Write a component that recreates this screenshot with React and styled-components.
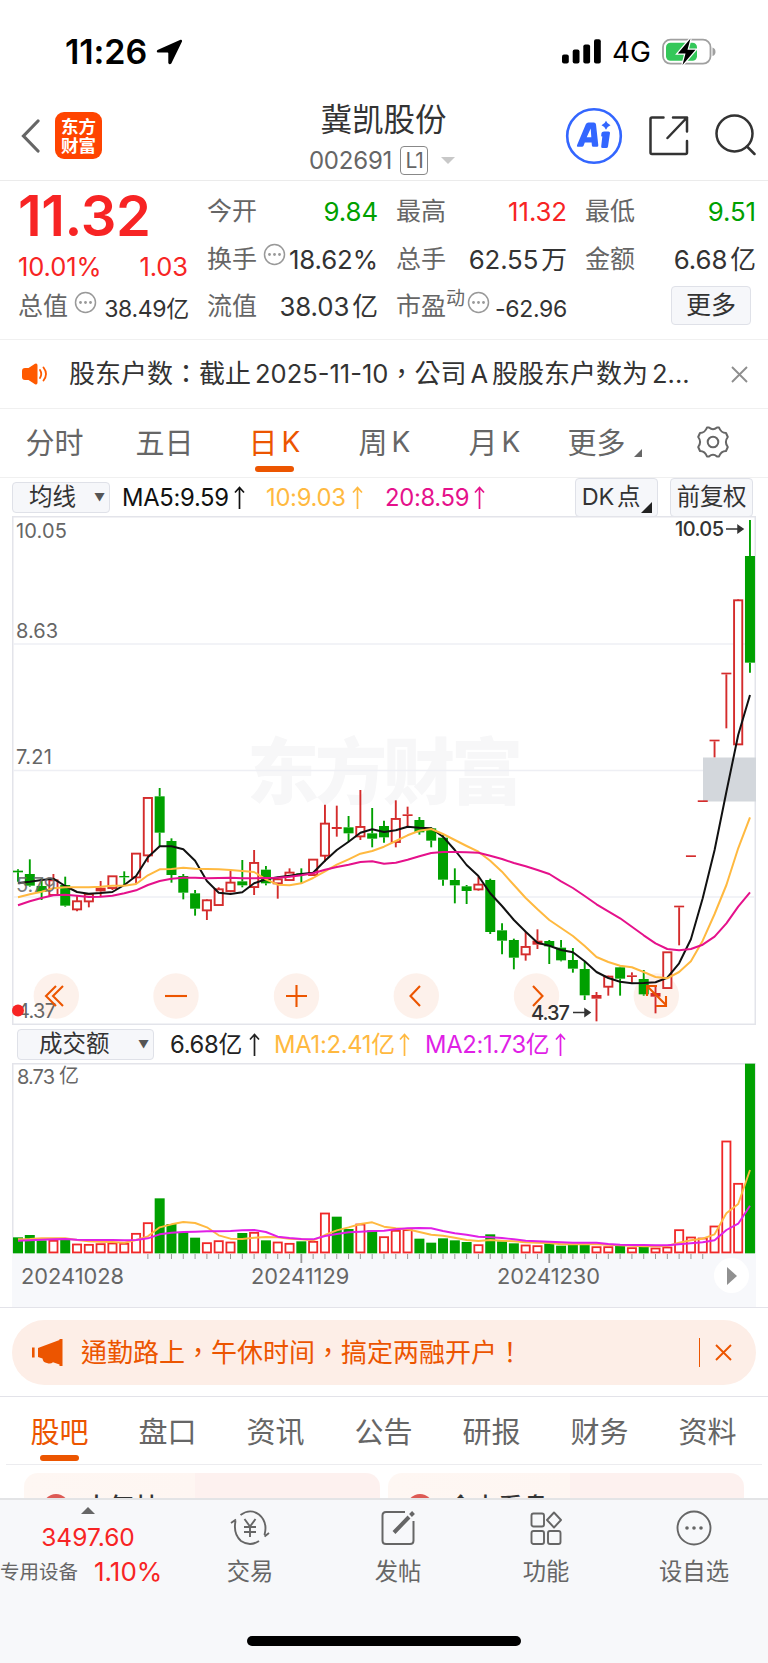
import { useState } from 'react'
import styled, { createGlobalStyle, css } from 'styled-components'

const RED = '#f72424'
const GREEN = '#00a000'
const ORANGE = '#ec5500'
const YELLOW = '#ffb940'
const PINK = '#e5118b'
const PURPLE = '#e01fe6'

// [color, high, body top, body bottom, low] in thirds of a px
const candles = [
  ['g', 298, 302, 307, 335], ['g', 268, 312, 347, 350], ['g', 325, 348, 366, 390], ['r', 312, 330, 376, 376],
  ['g', 320, 345, 407, 410], ['r', 375, 393, 419, 424], ['r', 370, 372, 395, 412], ['r', 333, 353, 364, 380],
  ['r', 318, 318, 355, 360], ['g', 304, 318, 322, 345], ['r', 249, 250, 323, 340], ['r', 82, 83, 257, 277],
  ['g', 54, 79, 188, 230], ['g', 205, 213, 315, 338], ['g', 312, 318, 368, 388], ['g', 360, 370, 416, 437],
  ['r', 388, 390, 422, 450], ['r', 352, 357, 406, 406], ['r', 303, 337, 364, 367], ['g', 270, 334, 346, 352],
  ['r', 240, 278, 352, 375], ['g', 288, 299, 340, 346], ['r', 325, 327, 341, 386], ['r', 295, 307, 331, 333],
  ['g', 295, 310, 314, 340], ['r', 268, 268, 316, 318], ['r', 104, 160, 258, 275], ['r', 107, 171, 177, 200],
  ['g', 138, 172, 190, 216], ['r', 60, 170, 200, 210], ['g', 114, 190, 206, 232], ['g', 152, 168, 202, 218],
  ['r', 91, 146, 217, 232], ['r', 110, 133, 138, 172], ['g', 141, 150, 187, 194], ['g', 172, 175, 212, 232],
  ['g', 195, 203, 329, 347], ['g', 295, 330, 346, 400], ['g', 345, 349, 363, 402], ['r', 320, 343, 359, 362],
  ['g', 326, 330, 486, 492], ['g', 460, 481, 512, 553], ['g', 506, 510, 563, 598], ['r', 485, 530, 554, 572],
  ['r', 478, 512, 524, 537], ['g', 510, 513, 529, 582], ['g', 510, 533, 571, 574], ['g', 534, 570, 596, 608],
  ['g', 575, 597, 676, 690], ['r', 666, 675, 686, 754], ['r', 617, 619, 651, 677], ['g', 590, 592, 626, 677],
  ['r', 607, 616, 621, 638], ['g', 600, 627, 673, 677], ['r', 645, 669, 680, 730], ['r', 546, 546, 655, 657],
  ['r', 407, 407, 412, 526], ['r', 256, 256, 261, 261], ['r', 91, 91, 96, 96], ['r', -91, -91, -86, -38],
  ['r', -292, -292, -287, -125], ['r', -512, -510, -76, -76], ['g', -750, -642, -322, -292],
]

const ma5 = [339, 335, 330, 326, 348, 366, 371, 369, 366, 345, 318, 262, 229, 229, 238, 272, 333, 368, 372, 367, 340, 328, 322, 317, 312, 308, 272, 240, 215, 188, 178, 186, 181, 170, 173, 175, 200, 240, 285, 318, 370, 408, 450, 485, 518, 527, 540, 547, 574, 606, 624, 635, 640, 639, 637, 623, 580, 508, 385, 240, 65, -105, -225]
const ma10 = [382, 373, 365, 355, 352, 352, 352, 350, 347, 347, 342, 316, 298, 297, 293, 296, 297, 298, 300, 303, 306, 328, 344, 346, 340, 324, 304, 284, 268, 251, 243, 230, 213, 196, 182, 177, 192, 210, 228, 245, 272, 305, 345, 384, 418, 450, 474, 498, 528, 561, 576, 587, 592, 606, 621, 625, 606, 574, 512, 432, 345, 235, 142]
const ma20 = [406, 394, 384, 376, 374, 377, 381, 380, 377, 370, 361, 345, 333, 326, 323, 323, 325, 324, 323, 325, 325, 324, 323, 320, 316, 310, 299, 291, 284, 276, 274, 281, 278, 269, 259, 249, 246, 246, 247, 248, 257, 267, 279, 289, 300, 312, 334, 354, 378, 403, 424, 445, 470, 496, 520, 537, 541, 537, 524, 500, 460, 410, 367]

const volumes = [652, 645, 661, 661, 659, 672, 673, 671, 669, 670, 640, 608, 535, 612, 636, 653, 668, 662, 666, 639, 637, 661, 666, 670, 664, 664, 579, 590, 627, 612, 631, 650, 631, 629, 656, 668, 655, 661, 666, 674, 643, 664, 670, 675, 677, 670, 677, 674, 674, 680, 680, 678, 683, 681, 684, 681, 629, 651, 654, 618, 363, 490, 131]
const volumeColors = 'gggrgrrrrrrrgggg' + 'rrrgrgrrgrrggrgr' + 'rrgggggrgggrrggg' + 'grrgrgrrrrrrrrg'
const volMa1 = [658, 657, 655, 655, 655, 660, 664, 665, 666, 668, 660, 649, 622, 613, 606, 609, 622, 646, 656, 657, 653, 651, 652, 656, 658, 661, 645, 631, 622, 612, 607, 620, 625, 628, 636, 644, 647, 653, 660, 663, 660, 662, 664, 667, 668, 669, 673, 673, 673, 673, 674, 676, 677, 679, 679, 678, 668, 661, 656, 643, 580, 552, 450]
const volMa2 = [662, 661, 659, 658, 657, 659, 660, 660, 660, 661, 660, 655, 643, 638, 636, 635, 634, 634, 633, 631, 630, 636, 650, 654, 657, 658, 648, 642, 637, 635, 633, 632, 628, 625, 624, 625, 633, 640, 644, 650, 652, 654, 658, 662, 664, 665, 667, 668, 668, 668, 672, 674, 675, 675, 676, 676, 673, 670, 667, 661, 630, 611, 557]

const candleX = i => 6 + i * 11.806
const priceY = v => 254 + v / 3
const volY = v => (v - 129) / 3
const toPoints = (list, y) => list.map((v, i) => `${candleX(i).toFixed(1)},${y(v).toFixed(1)}`).join(' ')

const periods = ['分时', '五日', '日K', '周K', '月K', '更多']
const sections = ['股吧', '盘口', '资讯', '公告', '研报', '财务', '资料']

export default function App() {
  const [period, setPeriod] = useState('日K')
  const [section, setSection] = useState('股吧')

  return (
    <Screen>
      <GlobalStyle />
      <StatusBar>
        <Clock>11:26</Clock>
        <LocationIcon />
        <Network>
          <SignalIcon />
          <span>4G</span>
          <BatteryIcon />
        </Network>
      </StatusBar>

      <Header>
        <HeaderSide>
          <BackIcon />
          <Logo><span>东方</span><span>财富</span></Logo>
        </HeaderSide>
        <Title>
          <Name>冀凯股份</Name>
          <Code>
            002691 <Level>L1</Level>
            <Caret />
          </Code>
        </Title>
        <HeaderSide $end>
          <AiIcon />
          <ShareIcon />
          <SearchIcon />
        </HeaderSide>
      </Header>

      <Quote>
        <PriceColumn>
          <Price>11.32</Price>
          <Change><span>10.01%</span><span>1.03</span></Change>
          <Cell>
            <Label>总值</Label><Dots />
            <Value $small>38.49亿</Value>
          </Cell>
        </PriceColumn>
        <Cells>
          <Cell><Label>今开</Label><Value $color={GREEN}>9.84</Value></Cell>
          <Cell><Label>最高</Label><Value $color={RED}>11.32</Value></Cell>
          <Cell><Label>最低</Label><Value $color={GREEN}>9.51</Value></Cell>
          <Cell><Label>换手</Label><Dots /><Value>18.62%</Value></Cell>
          <Cell><Label>总手</Label><Value>62.55<Unit>万</Unit></Value></Cell>
          <Cell><Label>金额</Label><Value>6.68<Unit>亿</Unit></Value></Cell>
          <Cell><Label>流值</Label><Value>38.03<Unit>亿</Unit></Value></Cell>
          <Cell><Label>市盈<sup>动</sup></Label><Dots $tight /><Value $small>-62.96</Value></Cell>
          <Cell $end><More>更多</More></Cell>
        </Cells>
      </Quote>

      <Notice>
        <SpeakerIcon />
        <NoticeText>股东户数：截止<i>2025-11-10</i>，公司<i>A</i><i />股股东户数为<i>2...</i></NoticeText>
        <CloseIcon size={17} color="#8e8e8e" />
      </Notice>

      <Periods>
        {periods.map(name => (
          <Period key={name} $active={name === period} onClick={() => setPeriod(name)}>
            {name.replace('K', '')}
            {name.includes('K') && <b>K</b>}
            {name === '更多' && <Corner $size={8} $color="#666" />}
          </Period>
        ))}
        <Period $gear><GearIcon /></Period>
      </Periods>

      <Indicators>
        <Picker $width={98}>均线<small>▼</small></Picker>
        <Legend $color="#111" $width={123} $gap={21}>MA5:9.59<UpArrow /></Legend>
        <Legend $color={YELLOW} $width={97} $gap={22}>10:9.03<UpArrow /></Legend>
        <Legend $color={PINK} $width={100}>20:8.59<UpArrow /></Legend>
        <Toggles>
          <Toggle>DK<Unit>点</Unit><Corner $size={11} $color="#222" $float /></Toggle>
          <Toggle>前复权</Toggle>
        </Toggles>
      </Indicators>

      <Plot $height={509}>
        <PriceChart />
      </Plot>

      <Indicators $volume>
        <Picker $width={137} $indent>成交额<small>▼</small></Picker>
        <Legend $color="#222" $width={90} $gap={14}>6.68亿<UpArrow /></Legend>
        <Legend $color={YELLOW} $width={136} $gap={15}>MA1:2.41亿<UpArrow /></Legend>
        <Legend $color={PURPLE} $width={141}>MA2:1.73亿<UpArrow /></Legend>
      </Indicators>

      <Plot $height={190}>
        <VolumeChart />
      </Plot>
      <Axis>
        <AxisDate $left={9}>20241028</AxisDate>
        <AxisDate $left={126}>20241129</AxisDate>
        <AxisDate $left={142}>20241230</AxisDate>
        <Play><svg width="10" height="18"><path d="M0 0L10 9L0 18Z" fill="#909090" /></svg></Play>
      </Axis>

      <PromoRow>
        <Promo>
          <HornIcon />
          <PromoText>通勤路上，午休时间，搞定两融开户！</PromoText>
          <Divider />
          <CloseIcon size={17} color={ORANGE} />
        </Promo>
      </PromoRow>

      <Sections>
        {sections.map(name => (
          <Section key={name} $active={name === section} onClick={() => setSection(name)}>{name}</Section>
        ))}
      </Sections>

      <Cards>
        <Card $split="48%"><CardDot />大气林</Card>
        <Card $split="51%"><CardDot />今支看盘</Card>
      </Cards>

      <BottomBar>
        <Index>
          <UpMark />
          <IndexValue>3497.60</IndexValue>
          <IndexRow><span>专用设备</span><b>1.10%</b></IndexRow>
        </Index>
        <Action><TradeIcon />交易</Action>
        <Action><PostIcon />发帖</Action>
        <Action><GridIcon />功能</Action>
        <Action><MoreIcon />设自选</Action>
        <HomeIndicator />
      </BottomBar>
    </Screen>
  )
}

function PriceChart() {
  return (
    <svg width="744" height="509">
      <rect x="0.75" y="0.75" width="742.5" height="507.5" fill="#fff" stroke="#e3e4ea" strokeWidth="1.5" />
      <text x="235" y="282" fontSize="72" fontWeight="900" fill="#f7f7f8" textLength="276">东方财富</text>
      {[128, 254.5, 381].map(y => <line key={y} x1="1" x2="743" y1={y} y2={y} stroke="#eeeff4" strokeWidth="1.6" />)}
      <rect x="691" y="241.5" width="53" height="44" fill="#d3d7dc" />
      <g fontSize="20" fill="#666">
        <text x="4" y="22" textLength="51">10.05</text>
        <text x="4" y="121.500" textLength="42">8.63</text>
        <text x="4" y="248" textLength="36">7.21</text>
      </g>
      {[44.3, 164, 284.5, 404.3, 524.5, 644.3].map(x => <circle key={x} cx={x} cy="480" r="22.7" fill="#fdf1eb" />)}
      {candles.map(([color, high, top, bottom, low], i) => {
        const x = candleX(i)
        const fill = color === 'g' ? GREEN : '#d42c2c'
        const height = (bottom - top) / 3
        const hollow = color === 'r' && height > 4.5
        return (
          <g key={i} stroke={fill} strokeWidth="1.9">
            {high < top && <line x1={x} x2={x} y1={priceY(high)} y2={priceY(top)} />}
            {low > bottom && <line x1={x} x2={x} y1={priceY(bottom)} y2={priceY(low)} />}
            {hollow
              ? <rect x={x - 4.1} y={priceY(top) + 0.3} width="8.2" height={height - 0.6} fill="#fff" />
              : <rect x={x - 5} y={priceY(top)} width="10" height={height} fill={fill} stroke="none" />}
          </g>
        )
      })}
      <g fill="none" strokeWidth="2" strokeLinejoin="round">
        <polyline points={toPoints(ma5, priceY)} stroke="#111" />
        <polyline points={toPoints(ma10, priceY)} stroke={YELLOW} />
        <polyline points={toPoints(ma20, priceY)} stroke={PINK} />
      </g>
      <g fontSize="20" fill="#666">
        <text x="4" y="375.500" textLength="40" opacity="0.85">5.79</text>
        <text x="5" y="501.500" textLength="39">4.37</text>
      </g>
      <circle cx="6" cy="494.500" r="6" fill={RED} />
      <g fontSize="20" fontWeight="500" fill="#333">
        <text x="663" y="20" textLength="49">10.05</text>
        <text x="519" y="504" textLength="39">4.37</text>
      </g>
      <g stroke="#333" strokeWidth="1.5" fill="#333">
        <path d="M714 13H728M726 9.500L731 13L726 16.500Z" />
        <path d="M561 496.500H574M573 493L578 496.500L573 500Z" />
      </g>
      <g stroke={ORANGE} strokeWidth="2.1" fill="none">
        <path d="M44 470L34 480L44 490M51 470L41 480L51 490" />
        <path d="M153 480H175" />
        <path d="M274 480H295M284.500 469V491" />
        <path d="M408 470L398.500 480L408 490" />
        <path d="M521 470L530.500 480L521 490" />
        <path d="M635 480V470H645M636 471L654 489M644 490H654V480" />
      </g>
    </svg>
  )
}

function VolumeChart() {
  return (
    <svg width="744" height="201">
      <path d="M0.75 190V0.75H743.250V190" fill="#fff" stroke="#e3e4ea" strokeWidth="1.5" />
      <g fontSize="20" fill="#666">
        <text x="5" y="20.500" textLength="38">8.73</text>
        <text x="47" y="20">亿</text>
      </g>
      {volumes.map((v, i) => {
        const x = candleX(i)
        const height = volY(700) - volY(v)
        return volumeColors[i] === 'g'
          ? <rect key={i} x={x - 5} y={volY(v)} width="10" height={height} fill={GREEN} />
          : <rect key={i} x={x - 4.1} y={volY(v) + 0.5} width="8.2" height={height - 1.4} fill="#fff" stroke="#f02828" strokeWidth="1.8" />
      })}
      <g fill="none" strokeWidth="1.9" strokeLinejoin="round">
        <polyline points={toPoints(volMa1, volY)} stroke={YELLOW} />
        <polyline points={toPoints(volMa2, volY)} stroke={PURPLE} />
      </g>
      {Array.from({ length: 48 }, (_, n) => n + 11).map(i => {
        const major = i === 24 || i === 45
        return <line key={i} x1={candleX(i)} x2={candleX(i)} y1="191" y2={major ? 200 : 196} stroke="#999" strokeWidth={major ? 1.8 : 1} />
      })}
    </svg>
  )
}

const LocationIcon = () => (
  <svg width="27" height="26" viewBox="0 0 27 26"><path d="M24.500 0.700L1.500 11Q0 12.300 1.500 13.400H11.600Q12.300 13.500 12.300 14.200V24Q13.500 26.200 15.300 24.500L26 2.500Q26.300 0.300 24.500 0.700Z" /></svg>
)

const SignalIcon = () => (
  <svg width="39" height="25" viewBox="0 0 39 25">
    <rect x="0" y="15.500" width="6.800" height="9" rx="2" />
    <rect x="10.700" y="10.500" width="6.800" height="14" rx="2" />
    <rect x="21.300" y="5.500" width="6.800" height="19" rx="2" />
    <rect x="32" y="0.300" width="6.800" height="24.200" rx="2" />
  </svg>
)

const BatteryIcon = () => (
  <svg width="54" height="28" viewBox="0 0 54 28">
    <rect x="1" y="1.700" width="47.500" height="24" rx="7.500" fill="none" stroke="#a0a0a0" strokeWidth="1.800" />
    <rect x="4" y="4.700" width="31" height="18" rx="4.500" fill="#34c759" />
    <path d="M50.500 9.500Q53.500 10.500 53.500 13.700Q53.500 17 50.500 18Z" fill="#a0a0a0" />
    <path d="M28.500 0.500L15.800 15.500H23.500L20.500 27L33.500 11.700H25.500Z" fill="#000" stroke="#fff" strokeWidth="2.500" paintOrder="stroke" />
  </svg>
)

const BackIcon = () => (
  <svg width="20" height="34" viewBox="0 0 20 34"><path d="M17 2L2.500 17L17 32" fill="none" stroke="#666" strokeWidth="3.200" strokeLinecap="round" /></svg>
)

const AiIcon = () => (
  <svg width="58" height="58" viewBox="0 0 58 58" fill="#3366ff">
    <circle cx="29" cy="29" r="26.800" fill="none" stroke="#3366ff" strokeWidth="2.600" />
    <path fillRule="evenodd" d="M12 38.300L20.800 17.300Q21.600 15.600 23.500 15.600H28.800Q30.700 15.600 31 17.500L33.300 38.300Q33.400 39.800 32 39.800H28.200Q27 39.800 26.900 38.500L26.600 35.500H19.800L18.600 38.700Q18.200 39.800 17 39.800H13Q11.400 39.800 12 38.300ZM21.700 30.300H26.300L25.700 21.500Z" />
    <path d="M39 24.500H43.500Q45.200 24.500 45 26L43 39.500Q42.800 41 41.200 41H37.600Q36 41 36.200 39.500L37.300 29.500H36.800Q36 29.500 36.200 28.500L36.500 26Q36.800 24.500 39 24.500Z" />
    <path d="M41 13.800Q42.200 17 45.500 18.300Q42.200 19.500 41 22.800Q39.800 19.500 36.500 18.300Q39.800 17 41 13.800Z" />
  </svg>
)

const ShareIcon = () => (
  <svg width="40" height="40" viewBox="0 0 40 40" fill="none" stroke="#333" strokeWidth="2.500" strokeLinecap="round" strokeLinejoin="round">
    <path d="M14.500 1.500H3Q1.500 1.500 1.500 3V36.500Q1.500 38 3 38H36.500Q38 38 38 36.500V25M24 1.500H38V15.500M38 1.500L18.500 22" />
  </svg>
)

const SearchIcon = () => (
  <svg width="41" height="42" viewBox="0 0 41 42" fill="none" stroke="#333" strokeWidth="2.500" strokeLinecap="round">
    <circle cx="19.500" cy="19.500" r="18" />
    <path d="M32 32.500L39.500 40" />
  </svg>
)

const Dots = ({ $tight }) => (
  <DotsIcon $tight={$tight} width="23" height="23" viewBox="0 0 23 23">
    <circle cx="11.500" cy="11.500" r="10" fill="none" stroke="#999" strokeWidth="1.500" />
    <circle cx="6.500" cy="11.500" r="1.400" /><circle cx="11.500" cy="11.500" r="1.400" /><circle cx="16.500" cy="11.500" r="1.400" />
  </DotsIcon>
)

const SpeakerIcon = () => (
  <svg width="26" height="22" viewBox="0 0 26 22">
    <path d="M3 5H6.500L13 0.800Q15.500 0 15.500 2.500V19.500Q15.500 22 13 21.200L6.500 17H3Q0 17 0 14V8Q0 5 3 5Z" fill="#ff5a00" />
    <path d="M18 7Q20.500 11 18 15M21.500 4.500Q26.500 11 21.500 17.500" fill="none" stroke="#ff5a00" strokeWidth="1.800" strokeLinecap="round" />
  </svg>
)

const CloseIcon = ({ size, color }) => (
  <svg width={size} height={size} viewBox="0 0 17 17"><path d="M1 1L16 16M16 1L1 16" stroke={color} strokeWidth="1.900" /></svg>
)

const GearIcon = () => (
  <svg width="32" height="32" viewBox="0 0 32 32" fill="none" stroke="#666" strokeWidth="2">
    <path d="M12 1.500Q16 5 20 1.500H22Q24 7 29 7L30.800 11Q27 16 30.800 21L29 25Q24 25 22 30.500H20Q16 27 12 30.500H10Q8 25 3 25L1.200 21Q5 16 1.200 11L3 7Q8 7 10 1.500Z" strokeLinejoin="round" />
    <circle cx="16" cy="16" r="5.300" />
  </svg>
)

const UpArrow = () => (
  <svg width="11" height="23" viewBox="0 0 11 23" fill="none" stroke="currentColor" strokeWidth="1.700"><path d="M5.500 23V1.500M1 6.500L5.500 1.500L10 6.500" /></svg>
)

const HornIcon = () => (
  <svg width="31" height="27" viewBox="0 0 31 27" fill={ORANGE}>
    <path d="M0 8.500H2.600V18.500H0ZM6 9L27.500 1V0H30.500V27H27.500V25.500L21 23.200Q18.500 25.500 15 24Q11 23.500 10.500 19.500L6 18Z" />
  </svg>
)

const TradeIcon = () => (
  <svg width="40" height="36" viewBox="0 0 40 36" fill="none" stroke="#666" strokeWidth="1.900">
    <path d="M10.500 5Q20 -2 29 4.500Q38 12 34.500 25M39 23L34.500 26.500M29 31Q20 37 11 31Q3 24 5.500 11M1 13L6 9.500" />
    <path d="M14.500 9L20 16.500L25.500 9M20 16.500V27M14 17H26M14 22H26" />
  </svg>
)

const PostIcon = () => (
  <svg width="34" height="36" viewBox="0 0 34 36" fill="none" stroke="#666" strokeWidth="2">
    <path d="M24 2H5Q1.500 2 1.500 5.500V30.500Q1.500 34 5 34H29Q32.500 34 32.500 30.500V11" />
    <path d="M13 22.500L28 7M29.500 5.500L32.500 2.500" strokeWidth="4" />
  </svg>
)

const GridIcon = () => (
  <svg width="32" height="34" viewBox="0 0 32 34" fill="none" stroke="#666" strokeWidth="1.900" strokeLinejoin="round">
    <rect x="1.500" y="2.500" width="12.500" height="13" rx="2" />
    <rect x="1.500" y="20" width="12.500" height="13" rx="2" />
    <rect x="18" y="20" width="12.500" height="13" rx="2" />
    <path d="M24 1.500L31 9L24 16.500L17 9Z" />
  </svg>
)

const MoreIcon = () => (
  <svg width="36" height="36" viewBox="0 0 36 36">
    <circle cx="18" cy="18" r="16.500" fill="none" stroke="#666" strokeWidth="1.900" />
    <g fill="#666"><circle cx="11" cy="18" r="1.800" /><circle cx="18" cy="18" r="1.800" /><circle cx="25" cy="18" r="1.800" /></g>
  </svg>
)

const GlobalStyle = createGlobalStyle`
  * {
    box-sizing: border-box;
  }

  body {
    margin: 0;
    background: #fff;
    font-family: Inter, "Noto Sans CJK SC", sans-serif;
    -webkit-font-smoothing: antialiased;
  }

  svg {
    display: block;
    flex-shrink: 0;
  }
`

const Screen = styled.div`
  display: flex;
  flex-direction: column;
  width: 768px;
  height: 1663px;
  overflow: hidden;
  color: #333;
  white-space: nowrap;
`

const StatusBar = styled.div`
  display: flex;
  align-items: center;
  height: 91px;
  padding: 13px 52px 0 65px;
  color: #000;
`

const Clock = styled.div`
  width: 91px;
  font-size: 34px;
  font-weight: 600;
  letter-spacing: -0.1px;
`

const Network = styled.div`
  display: flex;
  align-items: center;
  gap: 11px;
  margin-left: auto;
  font-size: 28px;
`

const Header = styled.header`
  display: flex;
  justify-content: space-between;
  height: 90px;
  padding: 0 12px 0 21px;
  border-bottom: 1.5px solid #ebebeb;
`

const HeaderSide = styled.div`
  display: flex;
  align-items: center;
  justify-content: ${props => props.$end ? 'flex-end' : 'flex-start'};
  gap: ${props => props.$end ? '26px' : '14px'};
  width: 210px;
  padding-top: 1px;
  ${props => props.$end && css`
    svg:last-child {
      margin-top: -2px;
    }
  `}
`

const Logo = styled.div`
  display: flex;
  flex-direction: column;
  align-items: center;
  justify-content: center;
  width: 47px;
  height: 47px;
  border-radius: 9px;
  background: #ff4400;
  color: #fff;
  font-size: 17.5px;
  font-weight: 700;
  line-height: 19px;
`

const Title = styled.div`
  display: flex;
  flex-direction: column;
  align-items: center;
  padding-right: 10px;
`

const Name = styled.div`
  margin-top: 5px;
  font-size: 31.5px;
  line-height: 48px;
`

const Code = styled.div`
  display: flex;
  align-items: center;
  gap: 8px;
  margin: 2px 3px 0 0;
  color: #666;
  font-size: 24px;
  line-height: 30px;
  letter-spacing: -0.2px;
`

const Level = styled.span`
  width: 28px;
  height: 29px;
  border: 1.5px solid #888;
  border-radius: 4px;
  font-size: 21px;
  line-height: 27px;
  text-align: center;
  letter-spacing: -1px;
`

const Caret = styled.span`
  margin-left: 5px;
  border: 7px solid transparent;
  border-top-color: #c8c8c8;
  border-bottom: 0;
`

const Quote = styled.section`
  display: flex;
  gap: 20px;
  height: 160px;
  padding: 8px 13px 0 19px;
  border-bottom: 1.5px solid #f0f0f0;
`

const PriceColumn = styled.div`
  width: 169px;
`

const Price = styled.div`
  height: 60px;
  margin-left: -1px;
  color: ${RED};
  font-size: 56px;
  font-weight: 600;
  line-height: 54px;
  letter-spacing: -0.4px;
`

const Change = styled.div`
  display: flex;
  justify-content: space-between;
  height: 35px;
  margin-left: -1px;
  color: ${RED};
  font-size: 25.5px;
  line-height: 36px;
  letter-spacing: -0.1px;
`

const Cells = styled.div`
  flex: 1;
  display: grid;
  grid-template-columns: repeat(3, 169px);
  grid-auto-rows: 47.5px;
  column-gap: 20px;
`

const Cell = styled.div`
  display: flex;
  align-items: center;
  justify-content: ${props => props.$end ? 'flex-end' : 'space-between'};
  height: 47.5px;
`

const Label = styled.span`
  margin: -2px 0 0 -1px;
  color: #666;
  font-size: 25px;
  line-height: 36px;

  sup {
    position: relative;
    top: -1px;
    font-size: 19px;
    line-height: 0;
  }
`

const DotsIcon = styled.svg`
  margin: -10px auto 0 ${props => props.$tight ? '2px' : '6px'};
  fill: #999;
`

const Value = styled.span`
  margin-right: -1px;
  color: ${props => props.$color || '#333'};
  font-size: ${props => props.$small ? '23px' : '25.8px'};
  line-height: 30px;
  ${props => props.$small && 'padding-top: 4px;'}
  letter-spacing: ${props => props.$small ? '-0.3px' : '-0.1px'};
`

const Unit = styled.span`
  margin-left: 3px;
`

const More = styled.button`
  width: 80px;
  height: 39px;
  margin: -4px 4px 0 0;
  padding: 0;
  border: 1.5px solid #dfe1e8;
  border-radius: 4px;
  background: #f6f7fa;
  color: #333;
  font: inherit;
  font-size: 25px;
  line-height: 33px;
`

const Notice = styled.div`
  display: flex;
  align-items: center;
  height: 69px;
  padding: 0 20px 0 22px;
  border-bottom: 1.5px solid #f0f0f0;
`

const NoticeText = styled.div`
  flex: 1;
  margin: -5px 0 0 21px;
  font-family: Inter, "Noto Sans CJK TC", sans-serif;
  font-size: 26px;

  i {
    margin-left: 4px;
    font-style: normal;
    font-size: 25.5px;
  }
`

const Periods = styled.nav`
  display: grid;
  grid-template-columns: repeat(7, 110px);
  height: 69px;
  border-bottom: 1.5px solid #f0f0f0;
`

const activeMark = css`
  color: ${ORANGE};

  &::after {
    content: '';
    position: absolute;
    bottom: 5px;
    width: 39px;
    height: 6px;
    border-radius: 3px;
    background: ${ORANGE};
  }
`

const Period = styled.div`
  position: relative;
  display: flex;
  align-items: center;
  justify-content: center;
  gap: 4px;
  padding: 0 ${props => props.$gear ? 4 : 1}px ${props => props.$gear ? 1 : 3}px 0;
  color: #666;
  font-size: 29px;
  cursor: pointer;
  ${props => props.$active && activeMark}

  b {
    margin-top: 2px;
    font-weight: 400;
    font-size: 28px;
  }
`

const Corner = styled.span`
  align-self: flex-end;
  margin: ${props => props.$float ? '0 -1px 3px 1px' : '0 0 17px 4px'};
  border-left: ${props => props.$size}px solid transparent;
  border-bottom: ${props => props.$size}px solid ${props => props.$color};
`

const Indicators = styled.div`
  display: flex;
  align-items: center;
  height: 38px;
  padding: 1px 15px 0 ${props => props.$volume ? 17 : 12}px;
`

const Picker = styled.div`
  display: flex;
  align-items: center;
  justify-content: space-between;
  width: ${props => props.$width}px;
  height: 31px;
  margin-right: ${props => props.$indent ? 16 : 12}px;
  padding: 0 4px 0 ${props => props.$indent ? 21 : 16}px;
  border: 1.5px solid #dfe1e8;
  border-radius: 4px;
  background: #f6f7fa;
  font-size: 23.5px;
  line-height: 26px;

  small {
    color: #555;
    font-size: 11px;
  }
`

const Legend = styled.div`
  display: flex;
  align-items: center;
  justify-content: space-between;
  width: ${props => props.$width}px;
  margin-right: ${props => props.$gap || 0}px;
  padding-top: 1px;
  color: ${props => props.$color};
  font-size: 23.8px;
  line-height: 30px;
  letter-spacing: -0.3px;
`

const Toggles = styled.div`
  display: flex;
  gap: 12px;
  margin-left: auto;
`

const Toggle = styled.div`
  display: flex;
  align-items: center;
  justify-content: center;
  width: 83px;
  height: 39px;
  border: 1.5px solid #dfe1e8;
  border-radius: 4px;
  background: #f6f7fa;
  font-size: 23.5px;
  line-height: 34px;
  letter-spacing: -0.3px;
`

const Plot = styled.div`
  height: ${props => props.$height}px;
  margin-left: 12px;

  svg {
    position: relative;
    overflow: visible;
  }
`

const Axis = styled.div`
  display: flex;
  align-items: center;
  height: 54px;
  margin: 0 12px;
  padding-right: 7px;
  background: #f7f8fb;
  color: #666;
  font-size: 21.8px;
`

const AxisDate = styled.span`
  width: 104px;
  margin: -8px 0 0 ${props => props.$left}px;
`

const Play = styled.div`
  display: flex;
  align-items: center;
  justify-content: center;
  width: 35px;
  height: 35px;
  margin: -8px 0 0 auto;
  border-radius: 50%;
  background: #fff;
`

const PromoRow = styled.div`
  height: 90px;
  padding: 12px;
  border-top: 1.5px solid #e3e3e9;
  border-bottom: 1.5px solid #e3e3e9;
`

const Promo = styled.div`
  display: flex;
  align-items: center;
  height: 65px;
  padding: 0 24px 0 20px;
  border-radius: 33px;
  background: #fdeee7;
`

const PromoText = styled.div`
  flex: 1;
  margin: -4px 0 0 18px;
  color: ${ORANGE};
  font-family: "Noto Sans CJK TC", sans-serif;
  font-size: 26px;
`

const Divider = styled.div`
  width: 1.5px;
  height: 29px;
  margin-right: 15px;
  background: ${ORANGE};
`

const Sections = styled.nav`
  display: grid;
  grid-template-columns: repeat(7, 108px);
  height: 69px;
  margin: 0 6px;
  border-bottom: 1.5px solid #ececef;
`

const Section = styled.div`
  position: relative;
  display: flex;
  align-items: center;
  justify-content: center;
  padding: 0 1px 2px 0;
  color: #666;
  font-size: 29px;
  cursor: pointer;
  ${props => props.$active && activeMark}

  &::after {
    bottom: 3px;
  }
`

const Cards = styled.div`
  display: grid;
  grid-template-columns: 356px 356px;
  gap: 8px;
  height: 33px;
  padding: 8px 24px 0;
  overflow: hidden;
`

const Card = styled.div`
  display: flex;
  align-items: center;
  gap: 15px;
  height: 67px;
  padding-left: 19px;
  border-radius: 14px;
  background: linear-gradient(90deg, #fef7f3, #fef6f2 ${props => props.$split}, #fdf1ef ${props => props.$split});
  font-size: 25px;
  font-weight: 500;
  line-height: 38px;
`

const CardDot = styled.span`
  width: 26px;
  height: 26px;
  border-radius: 50%;
  background: #dd5a54;
`

const BottomBar = styled.footer`
  position: relative;
  display: grid;
  grid-template-columns: 176px repeat(4, 148px);
  height: 165px;
  border-top: 2.5px solid #e3e4e6;
  background: #f7f8fa;
`

const Index = styled.div`
  display: flex;
  flex-direction: column;
  align-items: center;
  color: ${RED};
`

const UpMark = styled.span`
  margin-top: 7px;
  border: 7px solid transparent;
  border-bottom-color: #666;
  border-top: 0;
`

const IndexValue = styled.div`
  margin-top: 5px;
  font-size: 24.5px;
  line-height: 36px;
`

const IndexRow = styled.div`
  display: flex;
  align-items: center;
  gap: 16px;
  width: 100%;
  line-height: 34px;

  span {
    color: #666;
    font-size: 19.5px;
  }

  b {
    font-size: 26px;
    font-weight: 400;
  }
`

const Action = styled.div`
  display: flex;
  flex-direction: column;
  align-items: center;
  padding-top: 10px;
  color: #666;
  font-size: 23.3px;
  line-height: 51px;

  svg {
    height: 36px;
  }
`

const HomeIndicator = styled.div`
  position: absolute;
  bottom: 17px;
  left: 247px;
  width: 274px;
  height: 10px;
  border-radius: 5px;
  background: #000;
`
